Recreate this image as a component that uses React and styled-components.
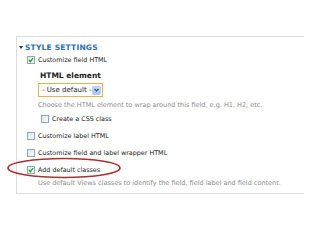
import React from "react";
import styled, { createGlobalStyle } from "styled-components";

const GlobalStyle = createGlobalStyle`
  html, body {
    margin: 0;
    padding: 0;
    background: #ffffff;
  }
  body {
    font-family: "DejaVu Sans", Verdana, sans-serif;
  }
`;

const Page = styled.div`
  width: 320px;
  height: 240px;
  box-sizing: border-box;
  padding: 36px 0 0 16px;
  position: relative;
  overflow: hidden;
`;

const Panel = styled.section`
  width: 288px;
  height: 158px;
  box-sizing: border-box;
  border-top: 1px solid #dcdcdc;
  border-left: 1px solid #dcdcdc;
  border-bottom: 1px solid #dcdcdc;
  padding: 5px 0 0 2px;
  display: flex;
  flex-direction: column;
`;

const Legend = styled.div`
  display: flex;
  align-items: center;
  gap: 1px;
  height: 10px;
  font-size: 7.5px;
  font-weight: bold;
  letter-spacing: 0.2px;
  color: #2a6fb0;
  text-transform: uppercase;
`;

const Arrow = styled.span`
  width: 0;
  height: 0;
  border-left: 2px solid transparent;
  border-right: 2px solid transparent;
  border-top: 3px solid #333;
  margin-right: 1px;
`;

const Row = styled.label`
  display: flex;
  align-items: center;
  gap: 3px;
  height: 10px;
  margin-top: ${(p) => p.$top}px;
  margin-left: ${(p) => p.$indent}px;
  font-size: 6.4px;
  color: #222;
  white-space: nowrap;
`;

const Box = styled.span`
  width: 6px;
  height: 6px;
  border: 1px solid #8aa6c4;
  background: linear-gradient(135deg, #e4e4e0, #fbfbf9);
  display: flex;
  align-items: center;
  justify-content: center;
  flex: none;
`;

const Heading = styled.div`
  margin: 6px 0 0 21px;
  height: 10px;
  line-height: 10px;
  font-size: 7.5px;
  font-weight: bold;
  color: #222;
`;

const Select = styled.div`
  margin: 2px 0 0 19px;
  width: 65px;
  height: 14px;
  box-sizing: border-box;
  border: 1px solid #e8b04c;
  background: #fff;
  display: flex;
  align-items: center;
  justify-content: space-between;
  padding: 0 1px 0 3px;
  font-size: 7px;
  color: #222;
`;

const DropButton = styled.span`
  width: 9px;
  height: 9px;
  border-radius: 1px;
  background: linear-gradient(#c9daf8, #a9c3f0);
  border: 1px solid #b8cdf0;
  box-sizing: border-box;
  display: flex;
  align-items: center;
  justify-content: center;
`;

const Description = styled.div`
  margin: ${(p) => p.$top}px 0 0 19px;
  height: 10px;
  line-height: 10px;
  font-size: 6.5px;
  color: #8a8a8a;
  white-space: nowrap;
`;

const Highlight = styled.svg`
  position: absolute;
  left: 6px;
  top: 156px;
  pointer-events: none;
`;

const Check = () => (
  <svg width="6" height="6" viewBox="0 0 6 6">
    <path d="M1 3 L2.4 4.6 L5 1.2" fill="none" stroke="#22a020" strokeWidth="1.3" />
  </svg>
);

const CheckRow = ({ checked, top, indent = 8, children }) => (
  <Row $top={top} $indent={indent}>
    <Box>{checked && <Check />}</Box>
    {children}
  </Row>
);

export default function App() {
  return (
    <Page>
      <GlobalStyle />
      <Panel>
        <Legend>
          <Arrow />
          Style settings
        </Legend>
        <CheckRow checked top={3}>
          Customize field HTML
        </CheckRow>
        <Heading>HTML element</Heading>
        <Select>
          - Use default -
          <DropButton>
            <svg width="5" height="4" viewBox="0 0 5 4">
              <path d="M0.5 1 L2.5 3 L4.5 1" fill="none" stroke="#2d4f8a" strokeWidth="1.2" />
            </svg>
          </DropButton>
        </Select>
        <Description $top={3}>
          Choose the HTML element to wrap around this field, e.g. H1, H2, etc.
        </Description>
        <CheckRow top={4} indent={22}>
          Create a CSS class
        </CheckRow>
        <CheckRow top={7}>Customize label HTML</CheckRow>
        <CheckRow top={7}>Customize field and label wrapper HTML</CheckRow>
        <CheckRow checked top={7}>
          Add default classes
        </CheckRow>
        <Description $top={3}>
          Use default Views classes to identify the field, field label and field content.
        </Description>
      </Panel>
      <Highlight width="118" height="24" viewBox="0 0 118 24">
        <ellipse cx="58" cy="12" rx="56" ry="9.5" fill="none" stroke="#a83232" strokeWidth="1.6" />
      </Highlight>
    </Page>
  );
}
